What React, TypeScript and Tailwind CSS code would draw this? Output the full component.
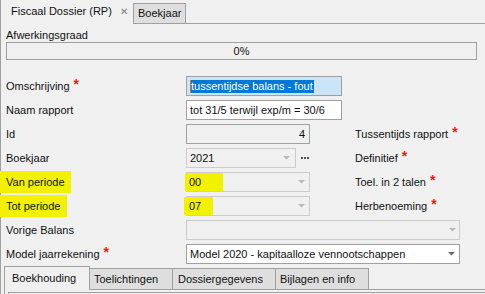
import React from 'react';

const Star = () => (
  <span className="relative -top-[2px] ml-[4px] text-[14px] font-bold leading-none text-[#ff1010]">*</span>
);

const Arrow = ({ dark }: { dark?: boolean }) => (
  <svg width="7" height="4" viewBox="0 0 7 4" className="shrink-0">
    <polygon points="0,0 7,0 3.5,3.5" fill={dark ? '#6a6a6a' : '#b8b8b8'} />
  </svg>
);

interface IRowProps {
  label: React.ReactNode;
  children: React.ReactNode;
}

const Row: React.FC<IRowProps> = ({ label, children }) => (
  <div className="flex h-5 items-center">
    <div className="flex w-[180px] items-center">{label}</div>
    {children}
  </div>
);

const RightLabel = ({ text }: { text: string }) => (
  <div className="flex items-center whitespace-nowrap">
    {text}
    <Star />
  </div>
);

const Marker = ({ children, width }: { children: React.ReactNode; width: string }) => (
  <span className={`-ml-[6px] flex h-[22px] items-center bg-[#f2f200] pl-[6px] ${width}`}>{children}</span>
);

const App: React.FC = () => {
  return (
    <div className="h-[294px] w-[485px] overflow-hidden bg-[#f0f0f0] font-['Liberation_Sans',Arial,sans-serif] text-[11px] leading-[13px] text-[#111]">
      {/* top tabs */}
      <div className="flex h-6">
        <div className="flex w-[133px] items-center border-l border-[#a0a0a0] pb-[1px] pl-[10px]">
          <span className="whitespace-nowrap">Fiscaal Dossier (RP)</span>
          <span className="ml-[8px] text-[10px] text-[#7a7a7a]">✕</span>
        </div>
        <div className="mt-[3px] flex w-[53px] items-center border border-[#a0a0a0] bg-[#dedede] pl-[4px]">
          Boekjaar
        </div>
        <div className="flex-1 border-b border-[#a0a0a0]" />
      </div>

      <div className="flex h-[270px] flex-col border-l border-[#a0a0a0] pl-[5px]">
        <div className="mt-[5px]">Afwerkingsgraad</div>
        <div className="flex h-[18px] w-[471px] items-center justify-center border border-[#a0a0a0]">0%</div>

        <div className="mt-[16px] flex flex-col gap-[4px]">
          <Row
            label={
              <>
                Omschrijving
                <Star />
              </>
            }
          >
            <div className="flex h-5 w-[156px] items-center border border-[#a0a0a0] bg-[#cce4f7] pl-[3px]">
              <span className="h-[13px] w-px bg-[#e0701a]" />
              <span className="whitespace-nowrap bg-[#0078d7] pr-[1px] text-white">tussentijdse balans - fout</span>
            </div>
          </Row>
          <Row label="Naam rapport">
            <div className="flex h-5 w-[156px] items-center border border-[#a0a0a0] bg-white pl-[3px] whitespace-nowrap">
              tot 31/5 terwijl exp/m = 30/6
            </div>
          </Row>
          <Row label="Id">
            <div className="flex h-5 w-[124px] items-center justify-end border border-[#a0a0a0] pr-[4px]">4</div>
            <div className="ml-[45px]">
              <RightLabel text="Tussentijds rapport" />
            </div>
          </Row>
          <Row label="Boekjaar">
            <div className="flex h-5 w-[110px] items-center justify-between border border-[#cccccc] pl-[3px] pr-[5px]">
              2021
              <Arrow />
            </div>
            <div className="ml-[5px] flex gap-[1px]">
              <span className="h-[2px] w-[2px] bg-[#555]" />
              <span className="h-[2px] w-[2px] bg-[#555]" />
              <span className="h-[2px] w-[2px] bg-[#555]" />
            </div>
            <div className="ml-[46px]">
              <RightLabel text="Definitief" />
            </div>
          </Row>
          <Row label={<Marker width="w-[71px]">Van periode</Marker>}>
            <div className="flex h-5 w-[124px] items-center justify-between border border-[#cccccc] pr-[4px]">
              <span className="-ml-[2px] flex h-[18px] w-[38px] items-center bg-[#f2f200] pl-[4px]">00</span>
              <Arrow />
            </div>
            <div className="ml-[45px]">
              <RightLabel text="Toel. in 2 talen" />
            </div>
          </Row>
          <Row label={<Marker width="w-[67px]">Tot periode</Marker>}>
            <div className="flex h-5 w-[124px] items-center justify-between border border-[#cccccc] pr-[4px]">
              <span className="-ml-[3px] flex h-[18px] w-[29px] items-center bg-[#f2f200] pl-[5px]">07</span>
              <Arrow />
            </div>
            <div className="ml-[45px]">
              <RightLabel text="Herbenoeming" />
            </div>
          </Row>
          <Row label="Vorige Balans">
            <div className="flex h-5 w-[274px] items-center justify-end border border-[#cccccc] pr-[3px]">
              <Arrow />
            </div>
          </Row>
          <Row
            label={
              <>
                Model jaarrekening
                <Star />
              </>
            }
          >
            <div className="flex h-5 w-[274px] items-center justify-between border border-[#a0a0a0] bg-white pl-[3px] pr-[4px] whitespace-nowrap">
              Model 2020 - kapitaalloze vennootschappen
              <Arrow dark />
            </div>
          </Row>
        </div>

        {/* bottom tabs */}
        <div className="-ml-[2px] mt-[2px] flex h-6 items-end">
          <div className="flex h-6 w-[86px] items-center border-x border-t border-[#a0a0a0] pl-[7px]">Boekhouding</div>
          <div className="-ml-px flex h-[22px] w-[84px] items-center border border-[#a0a0a0] bg-[#dedede] pl-[4px]">
            Toelichtingen
          </div>
          <div className="-ml-px flex h-[22px] w-[104px] items-center border border-[#a0a0a0] bg-[#dedede] pl-[5px]">
            Dossiergegevens
          </div>
          <div className="-ml-px flex h-[22px] w-[94px] items-center border border-[#a0a0a0] bg-[#dedede] pl-[4px]">
            Bijlagen en info
          </div>
          <div className="flex-1 border-b border-[#a0a0a0]" />
        </div>
        <div className="-ml-[2px] flex-1 border-l border-[#a0a0a0] pl-[3px] pt-[2px]">
          <div className="h-full border-l border-t border-[#a0a0a0]" />
        </div>
      </div>
    </div>
  );
};

export default App;
